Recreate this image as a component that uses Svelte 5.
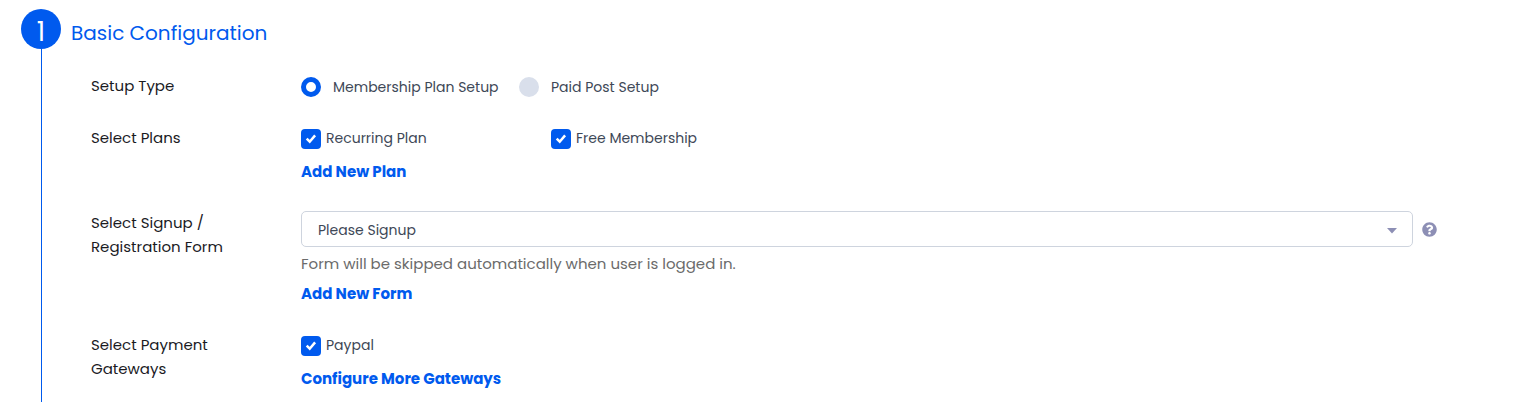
<script lang="ts">
	let setupType = $state('membership');
	let plans = $state([
		{ name: 'Recurring Plan', checked: true },
		{ name: 'Free Membership', checked: true }
	]);
	let gateways = $state([{ name: 'Paypal', checked: true }]);
	let form = $state('signup');
</script>

<section class="step">
	<div class="marker">
		<span class="number">1</span>
		<span class="line"></span>
	</div>

	<div class="content">
		<h2>Basic Configuration</h2>

		<div class="row">
			<div class="label" id="type-label">Setup Type</div>
			<div class="radios" role="radiogroup" aria-labelledby="type-label">
				<label class="radio">
					<input type="radio" name="setup" value="membership" bind:group={setupType} />
					Membership Plan Setup
				</label>
				<label class="radio">
					<input type="radio" name="setup" value="post" bind:group={setupType} />
					Paid Post Setup
				</label>
			</div>
		</div>

		<div class="row">
			<div class="label" id="plans-label">Select Plans</div>
			<div class="field" role="group" aria-labelledby="plans-label">
				<div class="checks">
					{#each plans as plan}
						<label class="check">
							<input type="checkbox" bind:checked={plan.checked} />
							{plan.name}
						</label>
					{/each}
				</div>
				<a href="#plan">Add New Plan</a>
			</div>
		</div>

		<div class="row">
			<label class="label" for="form">Select Signup / Registration Form</label>
			<div class="field">
				<div class="select-line">
					<select id="form" bind:value={form}>
						<option value="signup">Please Signup</option>
					</select>
					<button class="help" type="button" aria-label="Help">
						<svg viewBox="0 0 512 512" width="15" height="15">
							<path fill="currentColor" d="M504 256c0 137-111 248-248 248S8 393 8 256 119 8 256 8s248 111 248 248zM262.700 90c-54.500 0-89.200 23-116.500 63.800-3.500 5.300-2.400 12.400 2.700 16.300l34.700 26.300c5.200 3.900 12.600 3 16.700-2.100 17.900-22.700 30.100-35.800 57.300-35.800 20.400 0 45.700 13.100 45.700 33 0 15-12.400 22.700-32.500 34C247.100 238.500 216 254.900 216 296v4c0 6.600 5.400 12 12 12h56c6.600 0 12-5.400 12-12v-1.300c0-28.500 83.200-29.600 83.200-106.700 0-58-60.200-102-116.500-102zM256 338c-25.400 0-46 20.600-46 46s20.600 46 46 46 46-20.600 46-46-20.600-46-46-46z" />
						</svg>
					</button>
				</div>
				<p>Form will be skipped automatically when user is logged in.</p>
				<a href="#form">Add New Form</a>
			</div>
		</div>

		<div class="row">
			<div class="label" id="gateways-label">Select Payment Gateways</div>
			<div class="field" role="group" aria-labelledby="gateways-label">
				<div class="checks">
					{#each gateways as gateway}
						<label class="check">
							<input type="checkbox" bind:checked={gateway.checked} />
							{gateway.name}
						</label>
					{/each}
				</div>
				<a href="#gateways">Configure More Gateways</a>
			</div>
		</div>
	</div>
</section>

<style>
	:global(body) {
		margin: 0;
		background: #fff;
		font-family: Poppins, Inter, sans-serif;
		font-size: 15px;
		line-height: 24px;
		color: #1b1b1f;
	}

	.step {
		display: flex;
		gap: 10px;
		padding: 9px 91px 0 21px;
	}

	.marker {
		display: flex;
		flex-direction: column;
		align-items: flex-start;
		flex: 0 0 40px;
	}

	.number {
		width: 40px;
		height: 40px;
		border-radius: 50%;
		background: #005aee;
		color: #fff;
		font-size: 26px;
		line-height: 46px;
		text-align: center;
	}

	.line {
		flex: 1;
		width: 1px;
		margin-left: 20px;
		background: #005aee;
	}

	.content {
		flex: 1;
		min-width: 0;
		padding-bottom: 11px;
	}

	h2 {
		margin: 9px 0 26px;
		font-size: 20px;
		font-weight: 400;
		line-height: 30px;
		color: #005aee;
	}

	.row {
		display: flex;
		margin: 0 0 27px 20px;
	}

	.row:last-child {
		margin-bottom: 0;
	}

	.label {
		flex: 0 0 150px;
		margin-right: 60px;
	}

	.field {
		flex: 1;
		min-width: 0;
	}

	.radios,
	.checks {
		display: flex;
		flex-wrap: wrap;
		color: #3e4857;
		font-size: 14px;
	}

	.radio {
		display: flex;
		align-items: center;
		gap: 12px;
		min-width: 218px;
		height: 25px;
	}

	.check {
		display: flex;
		align-items: flex-start;
		gap: 5px;
		width: 250px;
		height: 26px;
	}

	input {
		appearance: none;
		box-sizing: border-box;
		flex: none;
		width: 20px;
		height: 20px;
		margin: 0;
		background: #d9dfeb;
		cursor: pointer;
	}

	input[type='radio'] {
		border-radius: 50%;
	}

	input[type='radio']:checked {
		background: #fff;
		border: 5px solid #005aee;
	}

	input[type='checkbox'] {
		margin-top: 3px;
		border-radius: 4px;
	}

	input[type='checkbox']:checked {
		background: #005aee url("data:image/svg+xml,%3Csvg xmlns='http://www.w3.org/2000/svg' viewBox='0 0 20 20'%3E%3Cpath d='M5.700 9.700l3 3 5.400-6.300' fill='none' stroke='%23fff' stroke-width='2.500'/%3E%3C/svg%3E");
	}

	a {
		display: block;
		width: fit-content;
		color: #005aee;
		font-weight: 700;
		text-decoration: none;
	}

	.checks + a {
		margin-top: 8px;
	}

	.select-line {
		display: flex;
		align-items: center;
		gap: 9px;
	}

	select {
		appearance: none;
		flex: 1;
		min-width: 0;
		height: 36px;
		padding: 2px 16px 0;
		border: 1px solid #ced4de;
		border-radius: 5px;
		background: #fff url("data:image/svg+xml,%3Csvg xmlns='http://www.w3.org/2000/svg' width='10' height='6'%3E%3Cpath d='M0 0h10L5 5.500z' fill='%238d8fb5'/%3E%3C/svg%3E") no-repeat right 15px top 16px;
		color: #3e4857;
		font-family: inherit;
		font-size: 14px;
	}

	.help {
		display: flex;
		padding: 0;
		border: 0;
		background: none;
		color: #8d8fb5;
		cursor: pointer;
	}

	p {
		margin: 5px 0 6px;
		color: #6b6b6b;
	}
</style>
